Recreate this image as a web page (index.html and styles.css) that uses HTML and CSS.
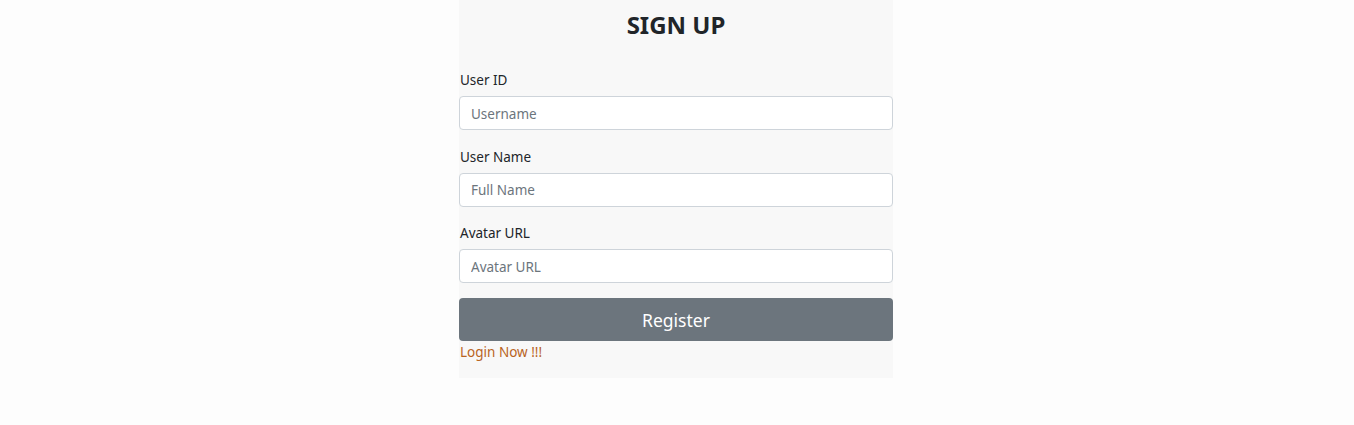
FILE: index.html
```html
<!DOCTYPE html>
<html lang="en">
<head>
<meta charset="utf-8">
<title>Sign Up</title>
<link rel="stylesheet" href="styles.css">
</head>
<body>
<main class="page">
  <form class="card">
    <h1 class="title">SIGN UP</h1>
    <div class="field">
      <label class="label" for="uid">User ID</label>
      <input class="input" id="uid" type="text" placeholder="Username">
    </div>
    <div class="field">
      <label class="label" for="uname">User Name</label>
      <input class="input" id="uname" type="text" placeholder="Full Name">
    </div>
    <div class="field">
      <label class="label" for="avatar">Avatar URL</label>
      <input class="input" id="avatar" type="text" placeholder="Avatar URL">
    </div>
    <button class="btn" type="button">Register</button>
    <a class="link" href="#">Login Now !!!</a>
  </form>
</main>
</body>
</html>
```

FILE: styles.css
```css
* { box-sizing: border-box; }
html, body {
  margin: 0;
  padding: 0;
  background: #fdfdfd;
  font-family: "Noto Sans", "Open Sans", sans-serif;
  color: #212529;
}
.page {
  display: flex;
  justify-content: center;
}
.card {
  width: 434px;
  margin-right: 2px;
  background: #f8f8f8;
  display: flex;
  flex-direction: column;
  padding-bottom: 15px;
}
.title {
  margin: 9px 0 29px;
  text-align: center;
  font-size: 24px;
  font-weight: 700;
  line-height: 32px;
  color: #212529;
}
.field {
  display: flex;
  flex-direction: column;
  margin-bottom: 16.5px;
}
.field:last-of-type {
  margin-bottom: 15px;
}
.label {
  font-size: 13.5px;
  line-height: 20px;
  margin-bottom: 6px;
  padding-left: 1px;
}
.input {
  height: 34px;
  border: 1px solid #ced4da;
  border-radius: 4px;
  background: #fff;
  padding: 1px 11px 0;
  font-family: inherit;
  font-size: 13.5px;
  color: #495057;
}
.input::placeholder { color: #6c757d; }
.btn {
  height: 43px;
  border: none;
  border-radius: 4px;
  background: #6c757d;
  color: #fff;
  font-family: inherit;
  font-size: 17.5px;
}
.link {
  font-size: 13.5px;
  line-height: 22px;
  color: #b8641f;
  text-decoration: none;
  padding-left: 1px;
}
```
